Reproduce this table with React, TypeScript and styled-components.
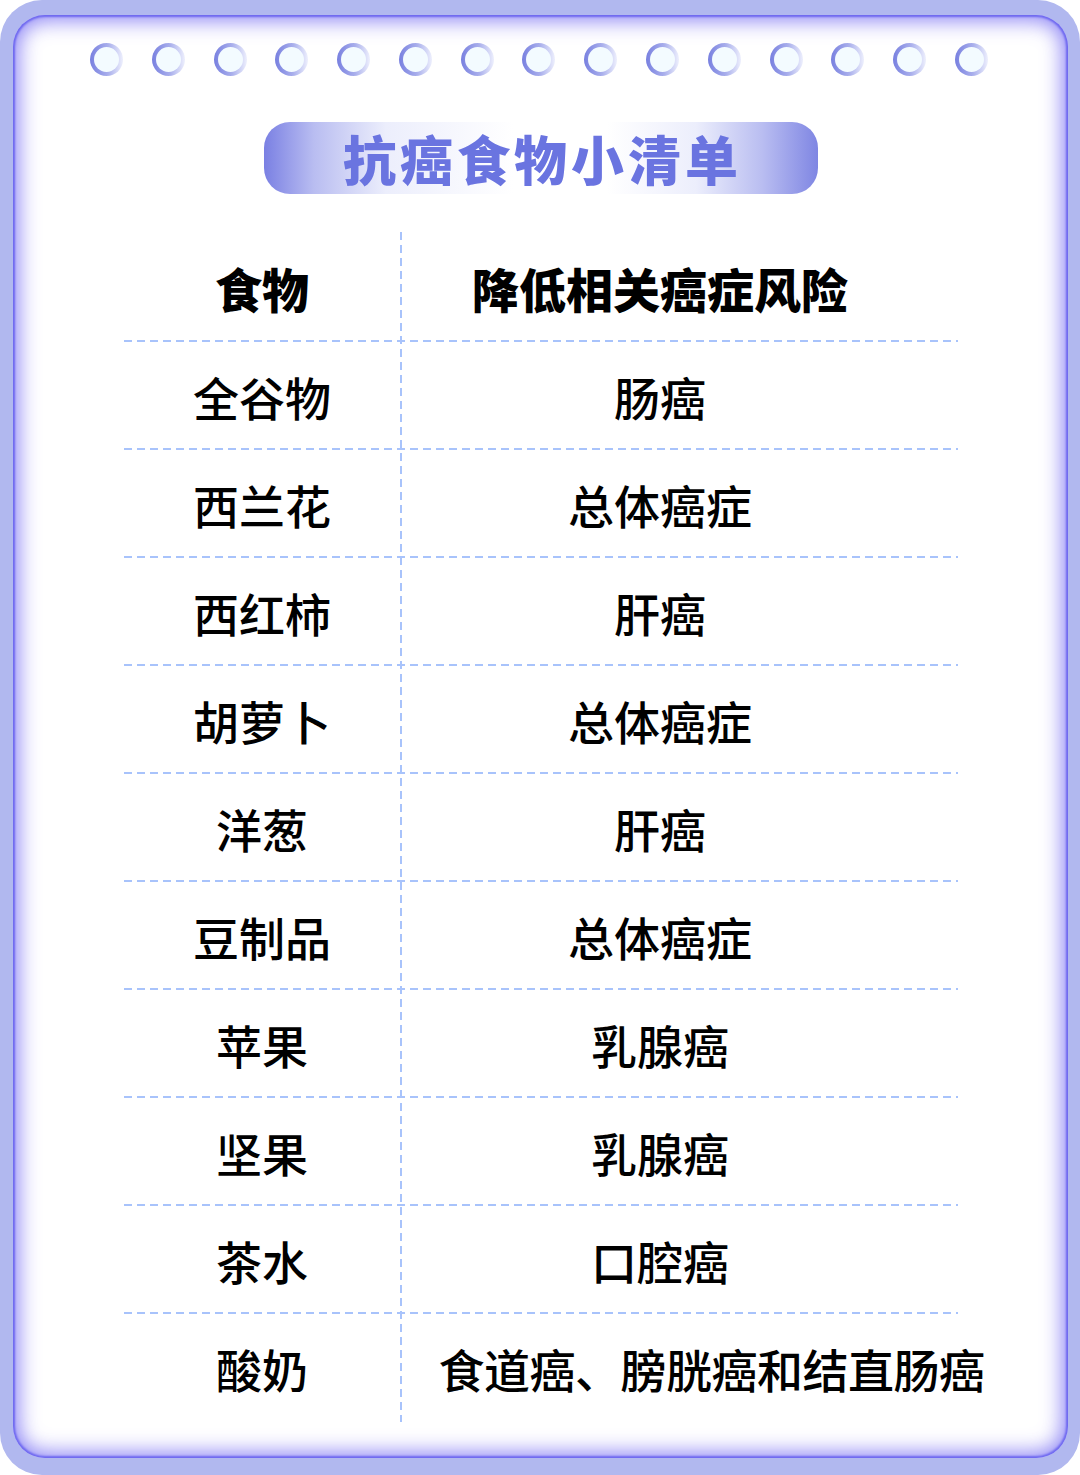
import styled, { createGlobalStyle } from "styled-components";

const GlobalStyle = createGlobalStyle`
  html, body {
    margin: 0;
    padding: 0;
    background: #ffffff;
  }
  body {
    font-family: "Noto Sans CJK SC", "Noto Sans", sans-serif;
  }
`;

const foods: { name: string; risk: string; wide?: boolean }[] = [
  { name: "全谷物", risk: "肠癌" },
  { name: "西兰花", risk: "总体癌症" },
  { name: "西红柿", risk: "肝癌" },
  { name: "胡萝卜", risk: "总体癌症" },
  { name: "洋葱", risk: "肝癌" },
  { name: "豆制品", risk: "总体癌症" },
  { name: "苹果", risk: "乳腺癌" },
  { name: "坚果", risk: "乳腺癌" },
  { name: "茶水", risk: "口腔癌" },
  { name: "酸奶", risk: "食道癌、膀胱癌和结直肠癌", wide: true },
];

export default function App() {
  return (
    <>
      <GlobalStyle />
      <Frame>
        <Card>
          <DotRow>
            {Array.from({ length: 15 }).map((_, i) => (
              <Dot key={i} />
            ))}
          </DotRow>
          <TitlePill>抗癌食物小清单</TitlePill>
          <Table>
            <Row $height={110}>
              <FoodCell $bold>食物</FoodCell>
              <RiskCell $bold>降低相关癌症风险</RiskCell>
            </Row>
            {foods.map((f, i) => (
              <Row key={f.name} $height={108} $last={i === foods.length - 1}>
                <FoodCell>{f.name}</FoodCell>
                <RiskCell $wide={f.wide}>{f.risk}</RiskCell>
              </Row>
            ))}
          </Table>
        </Card>
      </Frame>
    </>
  );
}

const Frame = styled.div`
  width: 1080px;
  height: 1475px;
  box-sizing: border-box;
  background: #b1b8ef;
  border-radius: 42px;
  padding: 15px 12px 17px 13px;
`;

const Card = styled.div`
  height: 100%;
  box-sizing: border-box;
  background: #ffffff;
  border-radius: 32px;
  box-shadow: inset 0 0 2px 2px #6e68f0, inset 0 0 20px 6px rgba(116, 106, 242, 0.8);
  padding-top: 28px;
  display: flex;
  flex-direction: column;
  align-items: center;
`;

const DotRow = styled.div`
  width: 898px;
  display: flex;
  justify-content: space-between;
  margin-left: -3px;
`;

const Dot = styled.div`
  width: 33px;
  height: 33px;
  box-sizing: border-box;
  border-radius: 50%;
  border: 4px solid transparent;
  background: linear-gradient(#f3fbff, #f3fbff) padding-box,
    linear-gradient(90deg, #7880e0 0%, #a9afec 55%, #eef0fd 100%) border-box;
`;

const TitlePill = styled.div`
  margin-top: 46px;
  width: 554px;
  height: 72px;
  border-radius: 26px;
  background: linear-gradient(
    90deg,
    #7a80e3 0%,
    #b9bdf1 9%,
    #eceefc 22%,
    #ffffff 45%,
    #ffffff 62%,
    #eceefc 78%,
    #b9bdf1 90%,
    #7f86e3 100%
  );
  display: flex;
  align-items: center;
  justify-content: center;
  color: #6a74e0;
  font-size: 53px;
  font-weight: 900;
  letter-spacing: 4px;
  padding-left: 4px;
  box-sizing: border-box;
  line-height: 1;
`;

const Table = styled.div`
  margin-top: 38px;
  width: 834px;
  margin-left: 0;
  display: flex;
  flex-direction: column;
  background-image: repeating-linear-gradient(
    to bottom,
    #a8c3fb 0,
    #a8c3fb 8px,
    transparent 8px,
    transparent 13px
  );
  background-size: 2px 100%;
  background-position: 276px 0;
  background-repeat: no-repeat;
`;

const Row = styled.div<{ $height: number; $last?: boolean }>`
  height: ${(p) => p.$height}px;
  display: flex;
  align-items: center;
  background-image: ${(p) =>
    p.$last
      ? "none"
      : "repeating-linear-gradient(to right, #a8c3fb 0, #a8c3fb 8px, transparent 8px, transparent 13px)"};
  background-size: 100% 2px;
  background-position: 0 100%;
  background-repeat: no-repeat;
`;

const FoodCell = styled.div<{ $bold?: boolean }>`
  width: 277px;
  display: flex;
  justify-content: center;
  font-size: ${(p) => (p.$bold ? 47 : 46)}px;
  font-weight: ${(p) => (p.$bold ? 900 : 500)};
  color: #000000;
  line-height: 1;
`;

const RiskCell = styled.div<{ $bold?: boolean; $wide?: boolean }>`
  width: 557px;
  box-sizing: border-box;
  display: flex;
  justify-content: ${(p) => (p.$wide ? "flex-start" : "center")};
  padding: ${(p) => (p.$wide ? "0 0 0 38px" : "0 38px 0 0")};
  white-space: nowrap;
  font-size: ${(p) => (p.$bold ? 47 : 46)}px;
  font-weight: ${(p) => (p.$bold ? 900 : 500)};
  letter-spacing: ${(p) => (p.$wide ? "-0.5px" : "0")};
  color: #000000;
  line-height: 1;
`;
